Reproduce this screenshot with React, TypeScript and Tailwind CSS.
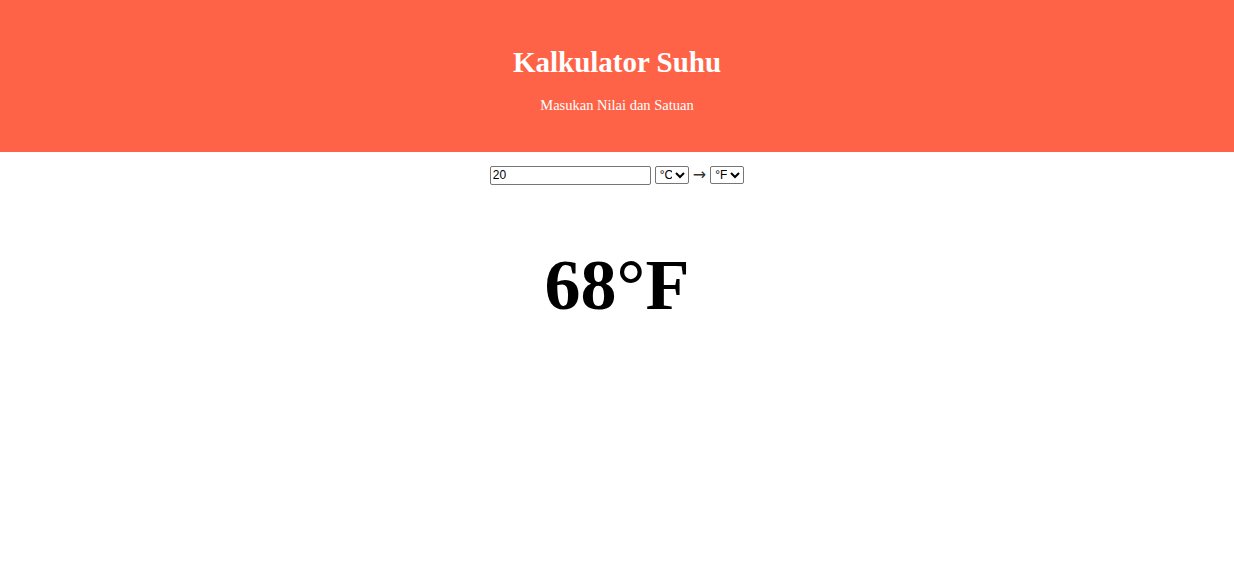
import React, { useState } from "react";

const App = () => {
  const [value, setValue] = useState("20");
  const [from, setFrom] = useState("C");
  const [to, setTo] = useState("F");

  const toC = (v: number, u: string) => (u === "C" ? v : u === "F" ? ((v - 32) * 5) / 9 : v - 273.15);
  const fromC = (c: number, u: string) => (u === "C" ? c : u === "F" ? (c * 9) / 5 + 32 : c + 273.15);
  const n = parseFloat(value);
  const result = isNaN(n) ? "" : Math.round(fromC(toC(n, from), to) * 100) / 100;
  const label = to === "K" ? "K" : `°${to}`;

  return (
    <div className="min-h-screen bg-white font-['Liberation_Serif',serif] text-black">
      {/* header */}
      <div className="bg-[#ff6347] h-[152px] flex flex-col items-center text-white">
        <h1 className="mt-[45px] text-[29px] font-bold leading-[34px]">Kalkulator Suhu</h1>
        <p className="mt-[17px] text-[14.5px] leading-[18px]">Masukan Nilai dan Satuan</p>
      </div>

      {/* input row */}
      <div className="flex justify-center items-center mt-[13px] h-[20px] font-['Liberation_Sans',sans-serif] text-[12px]">
        <input
          className="w-[161px] h-[19px] border border-[#767676] rounded-[2px] px-[2px] text-[12px]"
          value={value}
          onChange={(e) => setValue(e.target.value)}
        />
        <select
          className="ml-[4px] w-[34px] h-[18px] border border-[#767676] rounded-[2px] text-[12px] appearance-auto"
          value={from}
          onChange={(e) => setFrom(e.target.value)}
        >
          <option value="C">°C</option>
          <option value="F">°F</option>
          <option value="K">K</option>
        </select>
        <span className="mx-[4px] font-['DejaVu_Sans',sans-serif] text-[16px] leading-none text-[#333]">→</span>
        <select
          className="w-[34px] h-[18px] border border-[#767676] rounded-[2px] text-[12px] appearance-auto"
          value={to}
          onChange={(e) => setTo(e.target.value)}
        >
          <option value="C">°C</option>
          <option value="F">°F</option>
          <option value="K">K</option>
        </select>
      </div>

      {/* result */}
      <div className="flex justify-center mt-[59px]">
        <h2 className="text-[72px] font-bold leading-[83px]">
          {result}
          {label}
        </h2>
      </div>
    </div>
  );
};

export default App;
